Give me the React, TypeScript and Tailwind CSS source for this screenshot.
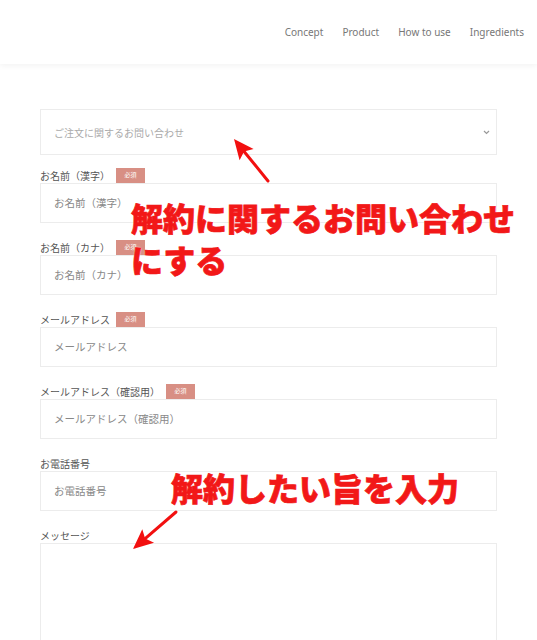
import React from "react";

const jp = { fontFamily: '"Noto Sans CJK JP", "Noto Sans", sans-serif' };

function Badge() {
  return (
    <span className="ml-[6px] inline-flex h-[15px] w-[29px] items-center justify-center bg-[#d88f84] text-[6px] leading-none text-white">
      必須
    </span>
  );
}

function Field({ label, required }: { label: string; required?: boolean }) {
  return (
    <div className="flex flex-col">
      <div className="flex h-[16px] items-center text-[10px] text-[#555]">
        <span>{label}</span>
        {required && <Badge />}
      </div>
      <div className="flex h-[40px] items-center border border-[#ececec] bg-white px-[13px] text-[10.5px] text-[#888]">
        {label}
      </div>
    </div>
  );
}

function Arrow({ x1, y1, x2, y2 }: { x1: number; y1: number; x2: number; y2: number }) {
  const dx = x2 - x1;
  const dy = y2 - y1;
  const len = Math.hypot(dx, dy);
  const ux = dx / len;
  const uy = dy / len;
  const hl = 20;
  const hw = 9;
  const bx = x2 - ux * hl;
  const by = y2 - uy * hl;
  const pts = `${x2},${y2} ${bx - uy * hw},${by + ux * hw} ${bx + ux * 4},${by + uy * 4} ${bx + uy * hw},${by - ux * hw}`;
  return (
    <g>
      <line x1={x1} y1={y1} x2={bx + ux * 4} y2={by + uy * 4} stroke="#f21010" strokeWidth="3" strokeLinecap="round" />
      <polygon points={pts} fill="#f21010" />
    </g>
  );
}

const noteStyle = {
  WebkitTextStroke: "0.7px #f21818",
  textShadow: "0 0 1px #fff, 0 0 2px #fff",
};

export default function App() {
  return (
    <div className="relative h-[640px] w-[537px] overflow-hidden bg-white" style={jp}>
      <header className="relative z-10 flex h-[64px] items-center justify-end bg-white pr-[13px] shadow-[0_2px_6px_rgba(0,0,0,0.05)]">
        <nav className="flex gap-[19px] text-[10px] text-[#777]" style={{ fontFamily: '"Noto Sans", sans-serif' }}>
          <span>Concept</span>
          <span>Product</span>
          <span>How to use</span>
          <span>Ingredients</span>
        </nav>
      </header>

      <main className="box-content flex w-[457px] flex-col gap-[16px] pl-[40px] pt-[45px]">
        <div className="-mb-[4px] flex h-[46px] items-center justify-between border border-[#ececec] bg-white pl-[13px] pr-[6px] text-[10px] text-[#aaa]">
          <span>ご注文に関するお問い合わせ</span>
          <svg width="7" height="5" viewBox="0 0 7 5" fill="none">
            <path d="M1 1l2.5 2.5L6 1" stroke="#999" strokeWidth="1.2" />
          </svg>
        </div>
        <Field label="お名前（漢字）" required />
        <Field label="お名前（カナ）" required />
        <Field label="メールアドレス" required />
        <Field label="メールアドレス（確認用）" required />
        <Field label="お電話番号" />
        <div className="flex flex-col">
          <div className="flex h-[16px] items-center text-[10px] text-[#555]">メッセージ</div>
          <div className="h-[140px] border border-[#ececec] bg-white" />
        </div>
      </main>

      <div
        className="pointer-events-none absolute left-[131px] top-[196px] text-[32px] font-black leading-[42px] text-[#f21818]"
        style={noteStyle}
      >
        解約に関するお問い合わせ
        <br />
        にする
      </div>
      <div
        className="pointer-events-none absolute left-[171px] top-[465px] text-[32px] font-black leading-[44px] text-[#f21818]"
        style={noteStyle}
      >
        解約したい旨を入力
      </div>
      <svg className="pointer-events-none absolute left-0 top-0" width="537" height="640">
        <Arrow x1={268} y1={181} x2={234} y2={139} />
        <Arrow x1={176} y1={512} x2={133} y2={549} />
      </svg>
    </div>
  );
}
